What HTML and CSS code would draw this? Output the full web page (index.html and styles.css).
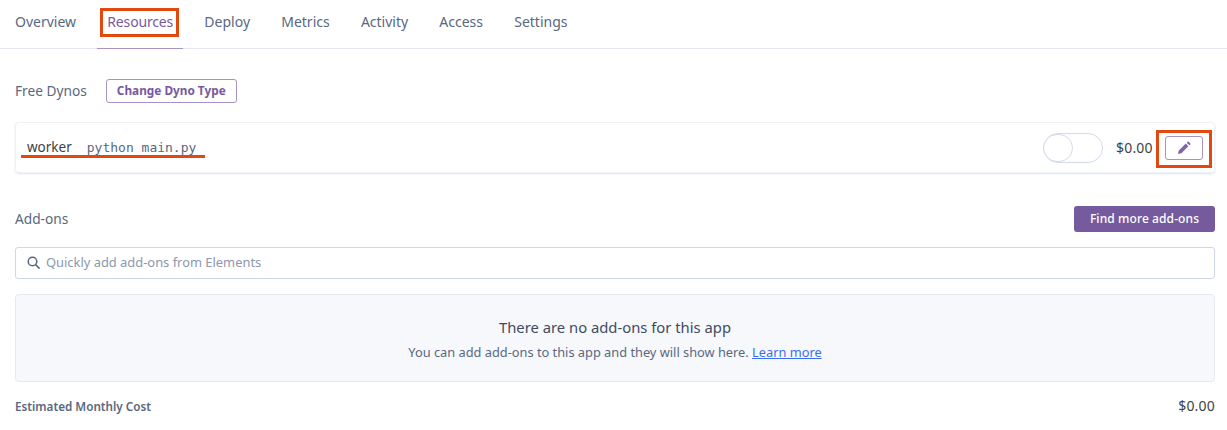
FILE: index.html
```html
<!DOCTYPE html>
<html lang="en">
<head>
  <meta charset="UTF-8">
  <title>Resources</title>
  <link rel="stylesheet" href="styles.css">
</head>
<body>
  <nav class="tabs">
    <a href="#" class="tab">Overview</a>
    <a href="#" class="tab tab-active">Resources<span class="mark mark-tab"></span></a>
    <a href="#" class="tab">Deploy</a>
    <a href="#" class="tab">Metrics</a>
    <a href="#" class="tab">Activity</a>
    <a href="#" class="tab">Access</a>
    <a href="#" class="tab">Settings</a>
  </nav>

  <main class="content">
    <div class="dyno-head">
      <span class="dyno-label">Free Dynos</span>
      <button class="btn-outline">Change Dyno Type</button>
    </div>

    <div class="dyno-card">
      <div class="dyno-command">
        <span class="dyno-name">worker</span>
        <code class="dyno-code">python main.py</code>
        <span class="mark mark-line"></span>
      </div>
      <div class="dyno-controls">
        <span class="toggle"><span class="toggle-knob"></span></span>
        <span class="dyno-price">$0.00</span>
        <button class="btn-edit" aria-label="Edit">
          <svg width="14" height="14" viewBox="0 0 14 14"><path d="M1 13l.8-3.4 7-7 2.6 2.6-7 7zM9.7 1.7l.9-.9a.8.8 0 0 1 1.1 0l1.5 1.5a.8.8 0 0 1 0 1.1l-.9.9z" fill="#8064ab"/></svg>
          <span class="mark mark-edit"></span>
        </button>
      </div>
    </div>

    <div class="addons-head">
      <span class="addons-label">Add-ons</span>
      <button class="btn-solid">Find more add-ons</button>
    </div>

    <label class="search">
      <svg width="13" height="13" viewBox="0 0 13 13"><circle cx="5.5" cy="5.5" r="4.3" fill="none" stroke="#596880" stroke-width="1.5"/><path d="M8.7 8.7l3.4 3.4" stroke="#596880" stroke-width="1.6" stroke-linecap="round"/></svg>
      <input class="search-input" type="text" placeholder="Quickly add add-ons from Elements">
    </label>

    <div class="empty">
      <div class="empty-title">There are no add-ons for this app</div>
      <div class="empty-text">You can add add-ons to this app and they will show here. <a href="#">Learn more</a></div>
    </div>

    <div class="cost">
      <span class="cost-label">Estimated Monthly Cost</span>
      <span class="cost-value">$0.00</span>
    </div>
  </main>
</body>
</html>
```

FILE: styles.css
```css
* {
  box-sizing: border-box;
}

body {
  margin: 0;
  font-family: "Noto Sans", Arial, sans-serif;
  font-size: 14px;
  color: #3f3f44;
  background-color: #fff;
  overflow: hidden;
}

a {
  text-decoration: none;
}

button {
  font-family: inherit;
  cursor: pointer;
}

.tabs {
  display: flex;
  gap: 11.2px;
  height: 49px;
  padding-left: 5px;
  border-bottom: 1px solid #e7e7f3;
}

.tab {
  position: relative;
  height: 49px;
  padding: 12px 10px 0;
  color: #596880;
  line-height: 19px;
}

.tab-active {
  color: #79589f;
  letter-spacing: -0.15px;
  border-bottom: 1px solid #a692c4;
}

/* red annotation marks drawn on top of the screenshot */
.mark {
  position: absolute;
  border: 3px solid #e2490f;
}

.mark-tab {
  left: 3px;
  top: 8px;
  width: 79px;
  height: 29px;
}

.mark-line {
  left: -6px;
  top: 17px;
  width: 184px;
  height: 3px;
  border-width: 3px 0 0;
}

.mark-edit {
  left: -10px;
  top: -7px;
  width: 56px;
  height: 38px;
}

.content {
  padding: 0 12px 0 15px;
}

.dyno-head {
  display: flex;
  align-items: center;
  gap: 19px;
  margin-top: 30px;
}

.dyno-label {
  margin-top: -2px;
  color: #596880;
  font-size: 13.7px;
}

.btn-outline {
  width: 131px;
  height: 24px;
  padding: 0 0 2px;
  border: 1px solid #a692c4;
  border-radius: 3px;
  background-color: #fff;
  color: #79589f;
  font-size: 11.8px;
  font-weight: 700;
}

.dyno-card {
  display: flex;
  justify-content: space-between;
  align-items: center;
  height: 51px;
  margin-top: 19px;
  padding: 0 11px;
  border: 1px solid #eef1f6;
  border-radius: 4px;
  box-shadow: 0 1px 2px rgba(89, 104, 128, 0.2);
}

.dyno-command {
  position: relative;
  display: flex;
  align-items: baseline;
  gap: 15px;
  margin-top: -1px;
}

.dyno-name {
  color: #3f3f44;
  font-size: 13.5px;
}

.dyno-code {
  font-family: "DejaVu Sans Mono", monospace;
  font-size: 13px;
  color: #596880;
}

.dyno-controls {
  display: flex;
  align-items: center;
}

.toggle {
  display: block;
  width: 60px;
  height: 30px;
  border: 1px solid #d5daea;
  border-radius: 15px;
}

.toggle-knob {
  display: block;
  width: 30px;
  height: 28px;
  border: 1px solid #d5daea;
  border-radius: 15px;
  margin-left: -1px;
  background-color: #fff;
}

.dyno-price {
  width: 37px;
  margin-top: -1px;
  margin-left: 13px;
  color: #3f3f44;
  letter-spacing: 0.2px;
}

.btn-edit {
  position: relative;
  display: flex;
  align-items: center;
  justify-content: center;
  width: 38px;
  height: 24px;
  margin-left: 12px;
  padding: 0;
  border: 1px solid #a692c4;
  border-radius: 3px;
  background-color: #fff;
}

.addons-head {
  display: flex;
  justify-content: space-between;
  align-items: center;
  height: 26px;
  margin-top: 33px;
}

.addons-label {
  margin-bottom: 2px;
  color: #596880;
  font-size: 13.7px;
}

.btn-solid {
  width: 141px;
  height: 26px;
  padding: 0 0 1px;
  border: 0;
  border-radius: 3px;
  background-color: #755b9e;
  color: #fff;
  font-size: 12px;
  font-weight: 500;
  letter-spacing: 0.1px;
}

.search {
  display: flex;
  align-items: center;
  gap: 6px;
  height: 32px;
  margin-top: 15px;
  padding: 0 0 2px 11px;
  border: 1px solid #cfd7e6;
  border-radius: 3px;
}

.search-input {
  flex: 1;
  border: 0;
  outline: 0;
  padding: 0;
  font-family: inherit;
  font-size: 12.9px;
}

.search-input::placeholder {
  color: #8c98ad;
  opacity: 1;
}

.empty {
  height: 88px;
  margin-top: 15px;
  padding-top: 22px;
  border: 1px solid #e7e9ee;
  border-radius: 4px;
  background-color: #f7f8fb;
  text-align: center;
}

.empty-title {
  color: #3f4b5f;
  font-size: 14.8px;
  line-height: 20px;
}

.empty-text {
  margin-top: 7px;
  color: #596880;
  font-size: 12.8px;
  line-height: 17px;
}

.empty-text a {
  color: #3c6df0;
  text-decoration: underline;
}

.cost {
  display: flex;
  justify-content: space-between;
  align-items: center;
  margin-top: 14px;
}

.cost-label {
  color: #596880;
  font-size: 11.7px;
  font-weight: 600;
}

.cost-value {
  color: #3f3f44;
  font-size: 14px;
  letter-spacing: 0.2px;
}
```
